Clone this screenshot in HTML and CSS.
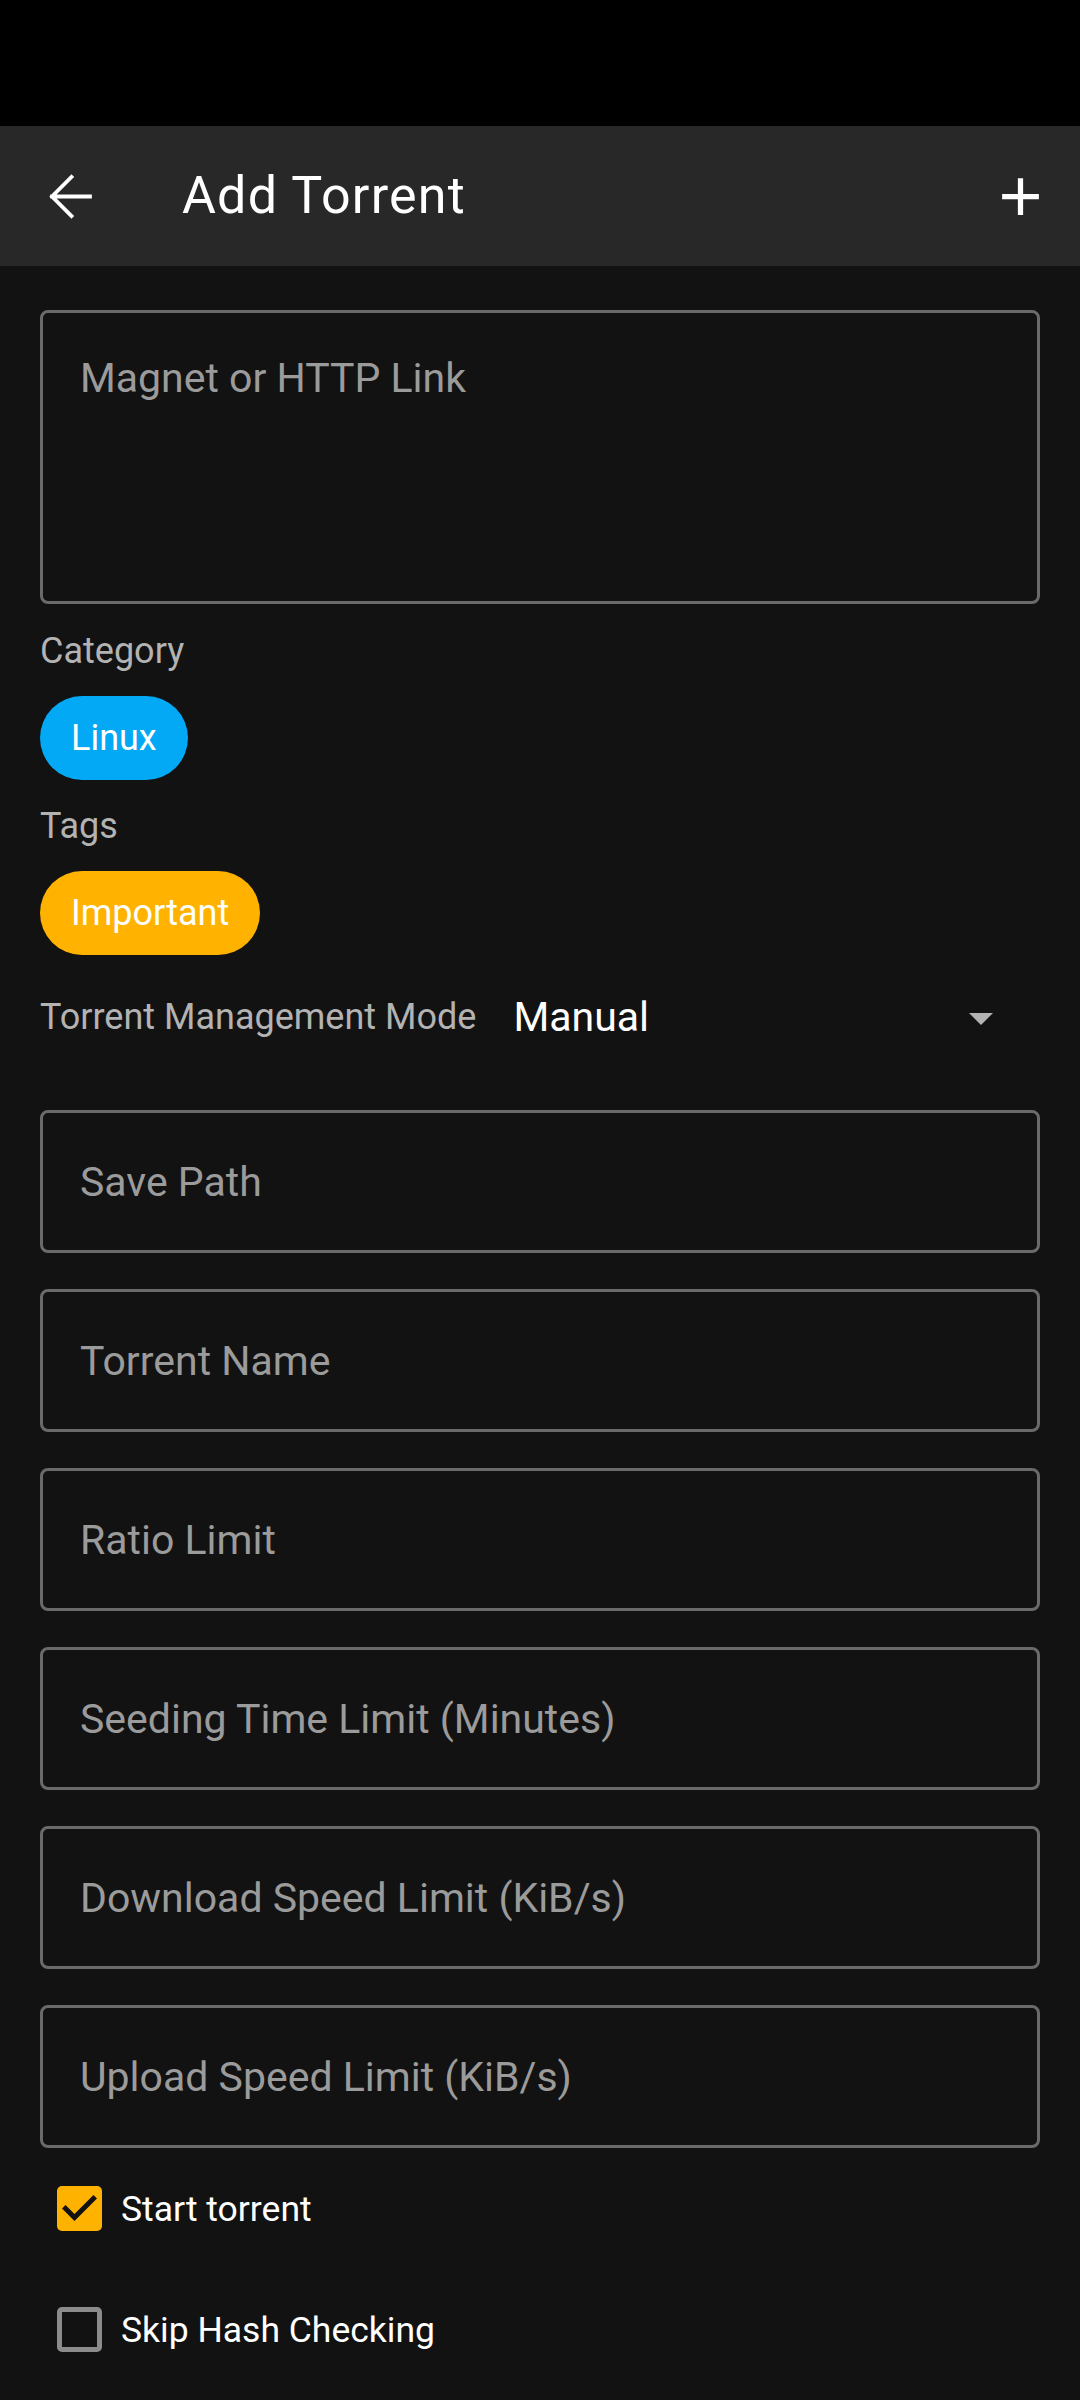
FILE: index.html
```html
<!DOCTYPE html>
<html lang="en">
<head>
<meta charset="utf-8">
<title>Add Torrent</title>
<link rel="stylesheet" href="styles.css">
</head>
<body>
<div class="status-bar"></div>
<header class="app-bar">
  <svg class="icon-back" viewBox="0 0 63 63" width="63" height="63">
    <path d="M51 31.5H13M32.5 12L13 31.5 32.5 51" fill="none" stroke="#fff" stroke-width="3.8" stroke-linecap="square"/>
  </svg>
  <h1 class="title">Add Torrent</h1>
  <svg class="icon-add" viewBox="0 0 24 24" width="63" height="63">
    <path d="M19 13h-6v6h-2v-6H5v-2h6V5h2v6h6v2z" fill="#fff"/>
  </svg>
</header>
<main class="form">
  <div class="field field-multi"><span class="placeholder">Magnet or HTTP Link</span></div>

  <div class="section-label">Category</div>
  <div class="chips"><span class="chip chip-blue">Linux</span></div>

  <div class="section-label section-label-tight">Tags</div>
  <div class="chips"><span class="chip chip-amber">Important</span></div>

  <div class="mode-row">
    <span class="mode-label">Torrent Management Mode</span>
    <div class="spinner">
      <span class="spinner-value">Manual</span>
      <span class="spinner-arrow"></span>
    </div>
  </div>

  <div class="fields">
    <div class="field"><span class="placeholder">Save Path</span></div>
    <div class="field"><span class="placeholder">Torrent Name</span></div>
    <div class="field"><span class="placeholder">Ratio Limit</span></div>
    <div class="field"><span class="placeholder">Seeding Time Limit (Minutes)</span></div>
    <div class="field"><span class="placeholder">Download Speed Limit (KiB/s)</span></div>
    <div class="field"><span class="placeholder">Upload Speed Limit (KiB/s)</span></div>
  </div>

  <div class="checks">
    <label class="check-row">
      <svg class="check-box" viewBox="3 3 18 18" width="45" height="45">
        <rect x="3" y="3" width="18" height="18" rx="2" fill="#ffb300"/>
        <path d="M10 17l-5-5 1.41-1.41L10 14.17l7.59-7.59L19 8l-9 9z" fill="#121212"/>
      </svg>
      <span class="check-text">Start torrent</span>
    </label>
    <label class="check-row">
      <span class="check-box check-empty"></span>
      <span class="check-text">Skip Hash Checking</span>
    </label>
  </div>
</main>
</body>
</html>
```

FILE: styles.css
```css
* { box-sizing: border-box; }

html, body {
  margin: 0;
  padding: 0;
  background: #121212;
}

body {
  width: 1080px;
  min-height: 2400px;
  font-family: Roboto, "Noto Sans", "Liberation Sans", sans-serif;
  color: #fff;
}

.status-bar {
  height: 126px;
  background: #000;
}

.app-bar {
  height: 140px;
  background: #282828;
  display: flex;
  align-items: center;
  padding: 0 28px 0 39px;
}

.icon-back { display: block; flex: none; }
.icon-add { display: block; flex: none; margin-left: auto; }

.title {
  margin: 0 0 0 80px;
  font-size: 52px;
  font-weight: 400;
  line-height: 60px;
  color: #fff;
  letter-spacing: 1.2px;
}

.form {
  padding: 44px 40px 0 40px;
}

.field {
  height: 143px;
  border: 3px solid #6a6a6a;
  border-radius: 8px;
  display: flex;
  align-items: center;
  padding: 0 37px;
}

.field-multi {
  height: 294px;
  align-items: flex-start;
  padding-top: 41px;
}

.placeholder {
  font-size: 41px;
  line-height: 48px;
  color: #9b9b9b;
}

.section-label {
  font-size: 36px;
  line-height: 42px;
  color: #b3b3b3;
  margin-top: 26px;
}

.section-label-tight { margin-top: 25px; }

.chips {
  display: flex;
  margin-top: 24px;
}

.chip {
  height: 84px;
  border-radius: 42px;
  padding: 0 31px;
  display: flex;
  align-items: center;
  font-size: 36px;
  color: #fff;
}

.chip-blue { background: #03a9f4; }
.chip-amber { background: #ffb300; }

.mode-row {
  display: flex;
  align-items: center;
  height: 124px;
}

.mode-label {
  font-size: 36px;
  color: #b3b3b3;
}

.spinner {
  flex: 1;
  display: flex;
  align-items: center;
  justify-content: space-between;
  margin-left: 37px;
  padding-right: 47px;
}

.spinner-value {
  font-size: 41px;
  color: #fff;
}

.spinner-arrow {
  width: 0;
  height: 0;
  border-left: 12px solid transparent;
  border-right: 12px solid transparent;
  border-top: 12px solid #b3b3b3;
  margin-top: 4px;
}

.fields {
  display: flex;
  flex-direction: column;
  gap: 36px;
  margin-top: 31px;
}

.checks {
  display: flex;
  flex-direction: column;
}

.check-row {
  height: 121px;
  display: flex;
  align-items: center;
  padding-left: 17px;
}

.check-box {
  display: block;
  width: 45px;
  height: 45px;
  flex: none;
}

.check-empty {
  border: 5.2px solid #8c8c8c;
  border-radius: 5px;
}

.check-text {
  margin-left: 19px;
  font-size: 35.5px;
  color: #fff;
}
```
